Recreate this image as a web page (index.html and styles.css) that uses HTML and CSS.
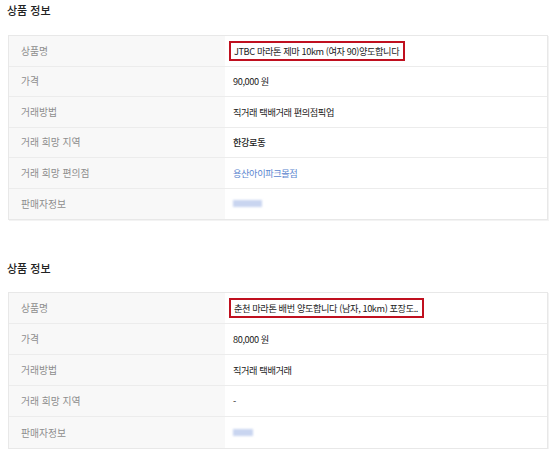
FILE: index.html
```html
<!DOCTYPE html>
<html lang="ko">
<head>
<meta charset="utf-8">
<link rel="stylesheet" href="styles.css">
</head>
<body>
<div class="page">
  <section class="block">
    <h2 class="title">상품 정보</h2>
    <div class="info-table compact">
      <div class="label">상품명</div>
      <div class="value"><span class="mark">JTBC 마라톤 제마 10km (여자 90)양도합니다</span></div>
      <div class="label">가격</div>
      <div class="value">90,000 원</div>
      <div class="label">거래방법</div>
      <div class="value">직거래 택배거래 편의점픽업</div>
      <div class="label">거래 희망 지역</div>
      <div class="value strong">한강로동</div>
      <div class="label">거래 희망 편의점</div>
      <div class="value link">용산아이파크몰점</div>
      <div class="label last">판매자정보</div>
      <div class="value last"><span class="blur wide"></span></div>
    </div>
  </section>
  <section class="block second">
    <h2 class="title">상품 정보</h2>
    <div class="info-table">
      <div class="label">상품명</div>
      <div class="value"><span class="mark">춘천 마라톤 배번 양도합니다 (남자, 10km) 포장도..</span></div>
      <div class="label">가격</div>
      <div class="value">80,000 원</div>
      <div class="label">거래방법</div>
      <div class="value">직거래 택배거래</div>
      <div class="label">거래 희망 지역</div>
      <div class="value">-</div>
      <div class="label last">판매자정보</div>
      <div class="value last"><span class="blur"></span></div>
    </div>
  </section>
</div>
</body>
</html>
```
FILE: styles.css
```css
html, body {
  margin: 0;
  padding: 0;
  background: #ffffff;
}
body {
  font-family: "Noto Sans CJK KR", "Noto Sans", sans-serif;
  color: #222;
}
.page {
  padding: 0 11px 0 8px;
}
.title {
  margin: 0 0 15px -1px;
  font-size: 11px;
  line-height: 20px;
  font-weight: 500;
  color: #222;
}
.second {
  margin-top: 38px;
}
.second .title {
  margin-bottom: 14px;
}
.info-table {
  display: grid;
  grid-template-columns: 216px 1fr;
  border: 1px solid #e8e8e8;
  box-shadow: 1px 1px 0 #f3f3f3;
}
.label, .value {
  box-sizing: border-box;
  height: 31px;
  border-bottom: 1px solid #ececec;
  display: flex;
  align-items: center;
}
.compact .label, .compact .value {
  height: 30.5px;
}
.label {
  background: #f8f8f8;
  padding-left: 12px;
  font-size: 9.8px;
  color: #8e8e8e;
}
.value {
  padding-left: 8px;
  font-size: 9.2px;
  color: #222;
  letter-spacing: -0.4px;
}
.label.last, .value.last {
  border-bottom: none;
}
.strong {
  font-weight: 500;
}
.link {
  color: #5b86cf;
}
.mark {
  margin-left: -4px;
  padding: 2px 4px 2px 3px;
  border: 2px solid #c0101f;
  line-height: 12px;
}
.blur {
  display: inline-block;
  width: 20px;
  height: 7px;
  background: #c9d5f0;
  filter: blur(1.2px);
}
.blur.wide {
  width: 29px;
}
```
